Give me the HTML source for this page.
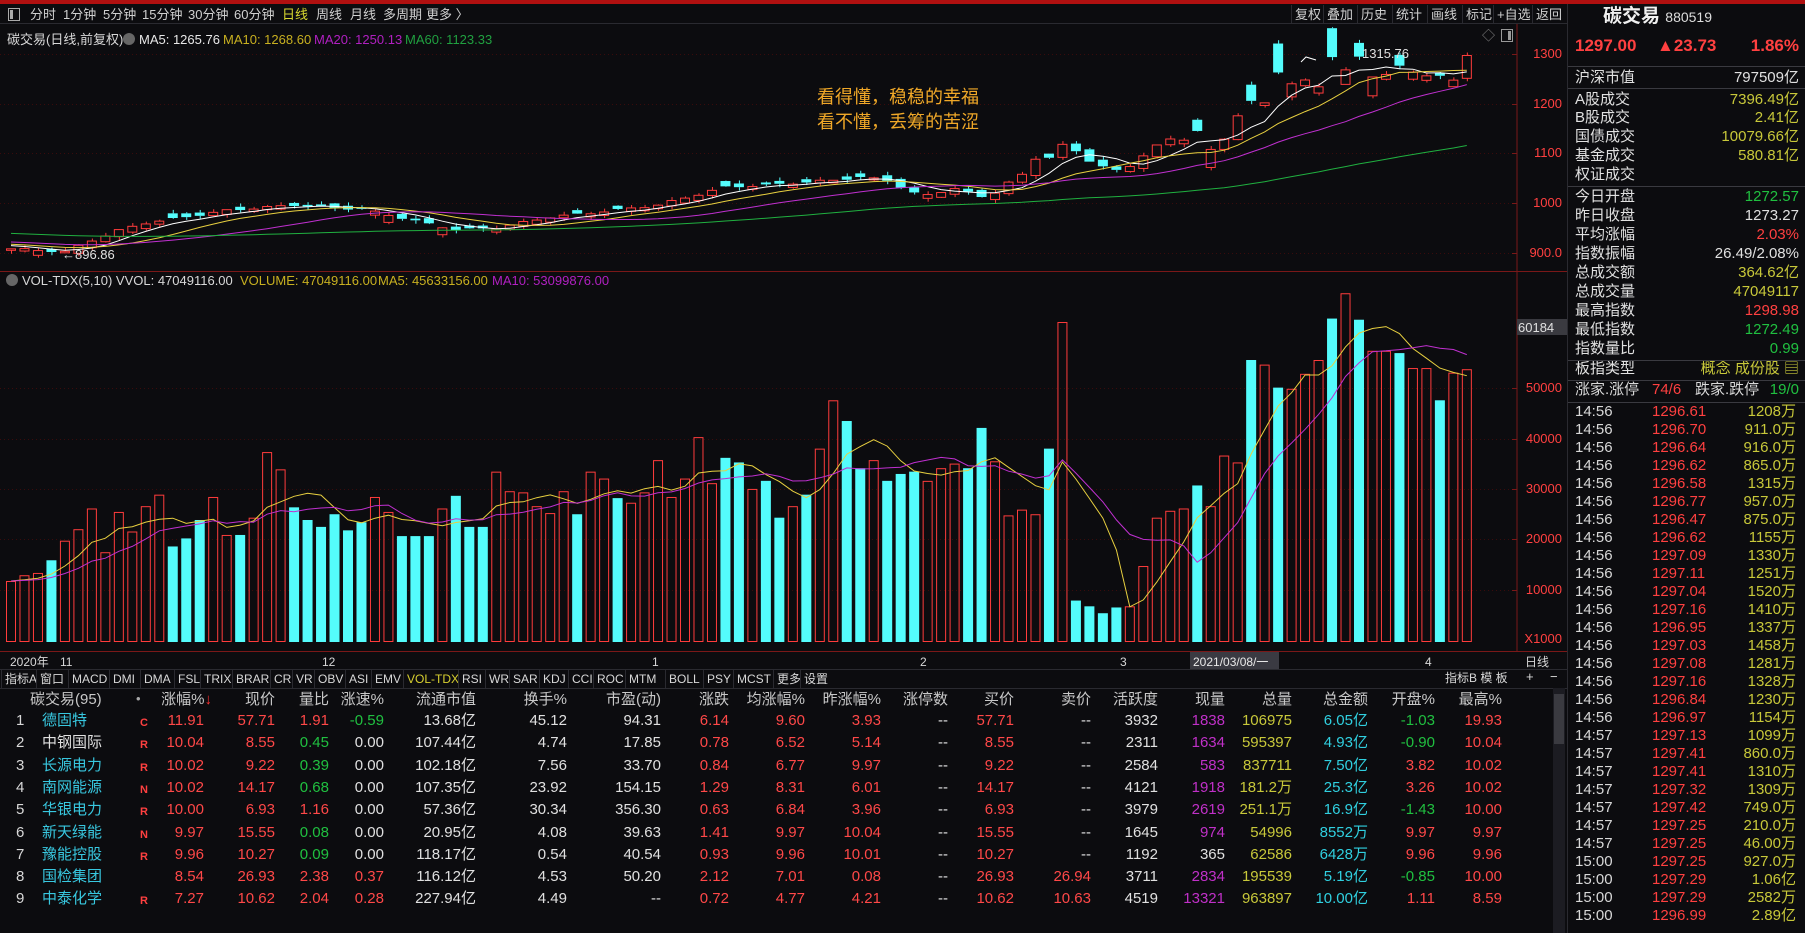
<!DOCTYPE html>
<html><head><meta charset="utf-8">
<style>
*{margin:0;padding:0;box-sizing:border-box}
body{width:1805px;height:933px;background:#0c0c0f;overflow:hidden;position:relative;font-family:"Liberation Sans","Noto Sans CJK SC",sans-serif;color:#d8d8d8}
.a{position:absolute;white-space:nowrap;line-height:1}
.r{text-align:right}
.red{color:#ff4040}.grn{color:#20c040}.yel{color:#c8c83a}.cy{color:#40d8f0}.mag{color:#c040c8}.wh{color:#e0e0e0}
.tb{font-size:13px;color:#d0d0d0}
.hl{position:absolute;height:1px;background:#3a3a40}
</style></head><body>
<div class="a" style="left:0;top:0;width:1805px;height:4px;background:#b01010"></div>
<svg id="g" width="1805" height="933" style="position:absolute;left:0;top:0"></svg>

<div class="a" style="left:0;top:4px;width:1568px;height:20px;border-bottom:1px solid #2a2a30"></div>
<div class="a" style="left:8px;top:8px;width:12px;height:13px;border:1px solid #aaa"></div>
<div class="a" style="left:10px;top:10px;width:3px;height:9px;background:#aaa"></div>
<div class="a tb" style="left:30px;top:8px">分时</div>
<div class="a tb" style="left:63px;top:8px">1分钟</div>
<div class="a tb" style="left:103px;top:8px">5分钟</div>
<div class="a tb" style="left:142px;top:8px">15分钟</div>
<div class="a tb" style="left:188px;top:8px">30分钟</div>
<div class="a tb" style="left:234px;top:8px">60分钟</div>
<div class="a tb" style="left:282px;top:8px;color:#d8d830">日线</div>
<div class="a tb" style="left:316px;top:8px">周线</div>
<div class="a tb" style="left:350px;top:8px">月线</div>
<div class="a tb" style="left:383px;top:8px">多周期</div>
<div class="a tb" style="left:426px;top:8px">更多 〉</div>
<div id="rb"></div>

<div class="a" style="left:7px;top:33px;font-size:13px">碳交易(日线,前复权)</div>
<div class="a" style="left:123px;top:33px;width:12px;height:12px;border-radius:6px;background:#666"></div>
<div class="a" style="left:139px;top:33px;font-size:13px;color:#e8e8e8">MA5: 1265.76</div>
<div class="a" style="left:223px;top:33px;font-size:13px;color:#c8b020">MA10: 1268.60</div>
<div class="a" style="left:314px;top:33px;font-size:13px;color:#b020c0">MA20: 1250.13</div>
<div class="a" style="left:405px;top:33px;font-size:13px;color:#20a040">MA60: 1123.33</div>
<div class="a" style="left:1482px;top:29px;font-size:13px;color:#888">◇</div>
<div class="a" style="left:1501px;top:29px;width:12px;height:13px;border:1px solid #999"></div>
<div class="a" style="left:1508px;top:31px;width:3px;height:9px;background:#999"></div>

<div class="a" style="left:817px;top:88px;font-size:18px;color:#f0a828">看得懂，稳稳的幸福</div>
<div class="a" style="left:817px;top:113px;font-size:18px;color:#f0a828">看不懂，丢筹的苦涩</div>
<div class="a" style="left:1362px;top:47px;font-size:13px;color:#e0e0e0">1315.76</div>
<div class="a" style="left:62px;top:248px;font-size:13px;color:#e0e0e0">←896.86</div>

<div class="a r red" style="left:1508px;top:47px;width:54px;font-size:13px">1300</div>
<div class="a r red" style="left:1508px;top:97px;width:54px;font-size:13px">1200</div>
<div class="a r red" style="left:1508px;top:146px;width:54px;font-size:13px">1100</div>
<div class="a r red" style="left:1508px;top:196px;width:54px;font-size:13px">1000</div>
<div class="a r red" style="left:1508px;top:246px;width:54px;font-size:13px">900.0</div>

<div class="a" style="left:6px;top:274px;width:12px;height:12px;border-radius:6px;background:#666"></div>
<div class="a" style="left:22px;top:274px;font-size:13px">VOL-TDX(5,10) VVOL: 47049116.00</div>
<div class="a" style="left:240px;top:274px;font-size:13px;color:#c8b020">VOLUME: 47049116.00</div>
<div class="a" style="left:378px;top:274px;font-size:13px;color:#c8b020">MA5: 45633156.00</div>
<div class="a" style="left:492px;top:274px;font-size:13px;color:#b020c0">MA10: 53099876.00</div>

<div class="a" style="left:1517px;top:319px;width:50px;height:16px;background:#3a3a40"></div>
<div class="a" style="left:1518px;top:321px;font-size:13px;color:#e0e0e0">60184</div>
<div class="a r red" style="left:1508px;top:381px;width:54px;font-size:13px">50000</div>
<div class="a r red" style="left:1508px;top:432px;width:54px;font-size:13px">40000</div>
<div class="a r red" style="left:1508px;top:482px;width:54px;font-size:13px">30000</div>
<div class="a r red" style="left:1508px;top:532px;width:54px;font-size:13px">20000</div>
<div class="a r red" style="left:1508px;top:583px;width:54px;font-size:13px">10000</div>
<div class="a r red" style="left:1508px;top:632px;width:54px;font-size:13px">X1000</div>

<div class="a" style="left:10px;top:656px;font-size:12px">2020年</div>
<div class="a" style="left:60px;top:656px;font-size:12px">11</div>
<div class="a" style="left:322px;top:656px;font-size:12px">12</div>
<div class="a" style="left:652px;top:656px;font-size:12px">1</div>
<div class="a" style="left:920px;top:656px;font-size:12px">2</div>
<div class="a" style="left:1120px;top:656px;font-size:12px">3</div>
<div class="a" style="left:1190px;top:652px;width:89px;height:17px;background:#3a3a42"></div>
<div class="a" style="left:1193px;top:656px;font-size:12px;color:#e8e8e8">2021/03/08/一</div>
<div class="a" style="left:1425px;top:656px;font-size:12px">4</div>
<div class="a" style="left:1525px;top:656px;font-size:12px">日线</div>

<div id="tabs"></div>
<div class="a" style="left:1445px;top:672px;font-size:12px">指标B 模 板</div>
<div class="a" style="left:1526px;top:670px;font-size:13px">+</div>
<div class="a" style="left:1550px;top:670px;font-size:13px">−</div>
<div class="a" style="left:1553px;top:688px;width:12px;height:245px;background:#1c1c22"></div>
<div class="a" style="left:1554px;top:694px;width:10px;height:50px;background:#3a3a40"></div>
<div id="tbl"></div>

<div class="a" style="left:1567px;top:4px;width:1px;height:929px;background:#2a2a30"></div>
<div class="a" style="left:1603px;top:7px;font-size:19px;font-weight:bold;color:#f0f0f0">碳交易 <span style="font-size:14px;font-weight:normal;color:#ddd">880519</span></div>
<div class="a red" style="left:1575px;top:37px;font-size:17px;font-weight:bold">1297.00</div>
<div class="a red" style="left:1657px;top:37px;font-size:17px;font-weight:bold">▲23.73</div>
<div class="a red r" style="left:1700px;top:37px;width:99px;font-size:17px;font-weight:bold">1.86%</div>
<div id="rp"></div>

<script>
const svg=document.getElementById('g');let s='';
function L(x1,y1,x2,y2,c,w,d){s+=`<line x1="${x1}" y1="${y1}" x2="${x2}" y2="${y2}" stroke="${c}" stroke-width="${w||1}" ${d?'stroke-dasharray="'+d+'"':''}/>`}
L(1517,24,1517,651,'#7a1818');
L(0,271.5,1567,271.5,'#7a1818');
L(0,651.5,1567,651.5,'#7a1818');
L(0,669.5,1567,669.5,'#2a2a30');
L(0,688.5,1567,688.5,'#2a2a30');
[54,104,153,203,253].forEach(y=>L(0,y+.5,1517,y+.5,'#3a0c0c',1,'1 3'));
[388,439,489,539,590].forEach(y=>L(0,y+.5,1517,y+.5,'#3a0c0c',1,'1 3'));
[54,104,153,203,253,388,439,489,539,590].forEach(y=>L(1512,y+.5,1517,y+.5,'#7a1818'));

const tops=[505,500,498,487,470,460,442,480,445,462,440,430,475,468,452,432,465,465,450,393,408,441,452,458,447,461,454,432,445,466,466,466,442,431,458,458,410,427,428,440,446,427,447,410,416,433,437,428,400,432,416,380,420,398,402,425,418,450,440,430,390,348,366,407,400,418,412,410,418,407,403,407,372,401,448,443,447,390,280,522,527,533,528,527,492,450,444,442,422,440,396,402,313,317,337,338,325,313,277,255,278,305,305,307,320,320,348,324,321];
const col=("rrrcrrrrrr rrcccrrcrr rccccccrrc ccrcccrrrr rrcrrcrrrr rrrccrccrc rrccrcccrr rccrrrrcrc cccrrrrrcr rrcrcrrrcr crrcrrcrr").replace(/ /g,'').split('');
const N=tops.length,P=13.48,X0=6,BW=10,VB=642;
const vh=tops.map(t=>(558-t)*1.151);
for(let i=0;i<N;i++){const x=X0+i*P,h=vh[i],y=VB-h;
 if(col[i]=='c')s+=`<rect x="${x}" y="${y}" width="${BW}" height="${h}" fill="#54fcfc"/>`;
 else s+=`<rect x="${x+.5}" y="${y+.5}" width="${BW-1}" height="${h-1}" fill="none" stroke="#ff3c3c"/>`;}
function ma(a,n,pad){return a.map((v,i)=>{let t=0;for(let k=0;k<n;k++){const j=i-k;t+=j>=0?a[j]:(pad?pad[pad.length+j]:a[0]);}return t/n})}
function poly(pts,c,w){s+=`<polyline points="${pts.map(p=>p[0].toFixed(1)+','+p[1].toFixed(1)).join(' ')}" fill="none" stroke="${c}" stroke-width="${w||1}"/>`}
const v5=ma(vh,5),v10=ma(vh,10);
poly(v5.map((v,i)=>[X0+i*P+5,VB-v]),'#e8d040');
poly(v10.map((v,i)=>[X0+i*P+5,VB-v]),'#c030d0');
const kp=[[0,908],[2,905],[4,902],[6,925],[8,945],[10,960],[13,972],[16,985],[21,996],[24,990],[26,988],[29,970],[33,946],[36,950],[40,972],[43,980],[48,996],[53,1032],[56,1036],[61,1046],[63,1052],[65,1046],[67,1020],[68,1016],[70,1030],[72,1012],[73,1022],[74,1042],[75,1056],[76,1089],[77,1093],[78,1117],[79,1103],[80,1085],[82,1065],[83,1073],[84,1097],[85,1117],[86,1127],[87,1127],[88,1147],[89,1107],[90,1127],[91,1177],[92,1207],[93,1200],[94,1262],[95,1242],[96,1248],[97,1232],[98,1294],[99,1270],[100,1294],[101,1252],[102,1260],[103,1278],[104,1262],[105,1255],[106,1258],[107,1248],[108,1297]];
const C=[];for(let i=0;i<N;i++){let a=kp[0],b=kp[kp.length-1];for(let k=0;k<kp.length-1;k++){if(i>=kp[k][0]&&i<=kp[k+1][0]){a=kp[k];b=kp[k+1];break}}
 const t=b[0]==a[0]?0:(i-a[0])/(b[0]-a[0]);C.push(a[1]+(b[1]-a[1])*t+Math.sin(i*1.7)*2);}
C[N-1]=1297;
const Y=p=>54+(1300-p)*0.497;
for(let i=0;i<N;i++){const c=C[i],d=Math.max(3,Math.abs(c-(i?C[i-1]:c))*0.9+Math.abs(Math.sin(i*2.3))*6);
 const o=col[i]=='c'?c+d:c-d;const hi=Math.max(o,c)+Math.abs(Math.sin(i*5.1))*7,lo=Math.min(o,c)-Math.abs(Math.cos(i*4.3))*7;
 const x=X0+i*P,cx=x+5,yt=Y(Math.max(o,c)),yb=Y(Math.min(o,c));
 const cc=col[i]=='c'?'#54fcfc':'#ff3c3c';
 L(cx+.5,Y(hi),cx+.5,yt,cc);L(cx+.5,yb,cx+.5,Y(lo),cc);
 if(col[i]=='c')s+=`<rect x="${x}" y="${yt}" width="${BW}" height="${Math.max(1,yb-yt)}" fill="#54fcfc"/>`;
 else s+=`<rect x="${x+.5}" y="${yt}" width="${BW-1}" height="${Math.max(1,yb-yt)}" fill="#0c0c0f" stroke="#ff3c3c"/>`;}
const pad=[];for(let k=0;k<60;k++)pad.push(965-k*0.85);
[[5,'#ffffff'],[10,'#e8d040'],[20,'#c030d0'],[60,'#20b040']].forEach(([n,c])=>poly(ma(C,n,pad).map((v,i)=>[X0+i*P+5,Y(v)]),c));
s+=`<path d="M1301 62 L1306 57 L1316 60" fill="none" stroke="#fff"/>`;
svg.innerHTML=s;

let h='';[['复权',1295],['叠加',1327],['历史',1361],['统计',1396],['画线',1431],['标记',1466],['+自选',1497],['返回',1536]].forEach(([t,x])=>{h+=`<div class="a tb" style="left:${x}px;top:8px">${t}</div><div class="a" style="left:${x-4}px;top:5px;width:1px;height:19px;background:#2a2a30"></div>`});
document.getElementById('rb').innerHTML=h;

h='';const tabs=[['指标A',5],['窗口',40],['MACD',72],['DMI',113],['DMA',144],['FSL',178],['TRIX',204],['BRAR',236],['CR',274],['VR',296],['OBV',318],['ASI',349],['EMV',375],['VOL-TDX',407],['RSI',462],['WR',489],['SAR',513],['KDJ',543],['CCI',572],['ROC',597],['MTM',629],['BOLL',669],['PSY',707],['MCST',737],['更多',777],['设置',804]];
tabs.forEach(([t,x])=>{h+=`<div class="a" style="left:${x}px;top:673px;font-size:12px;color:${t=='VOL-TDX'?'#d8d030':'#d8d8d8'}">${t}</div><div class="a" style="left:${x-4}px;top:670px;width:1px;height:18px;background:#2a2a30"></div>`});
document.getElementById('tabs').innerHTML=h;

const R=[204,275,329,384,476,567,661,729,805,881,948,1014,1091,1158,1225,1292,1368,1435,1502];
const hd=['涨幅%<span style="color:#ff3030">↓</span>','现价','量比','涨速%','流通市值','换手%','市盈(动)','涨跌','均涨幅%','昨涨幅%','涨停数','买价','卖价','活跃度','现量','总量','总金额','开盘%','最高%'];
h=`<div class="a" style="left:30px;top:692px;font-size:15px;color:#c8c8c8">碳交易(95)</div><div class="a" style="left:136px;top:692px;font-size:13px;color:#aaa">•</div>`;
hd.forEach((t,k)=>{h+=`<div class="a r" style="left:${R[k]-100+(k==0?8:0)}px;width:100px;top:692px;font-size:15px;color:#c8c8c8">${t}</div>`});
const D=[
['德固特','C','11.91','57.71','1.91','-0.59','13.68亿','45.12','94.31','6.14','9.60','3.93','--','57.71','--','3932','1838','106975','6.05亿','-1.03','19.93'],
['中钢国际','R','10.04','8.55','0.45','0.00','107.44亿','4.74','17.85','0.78','6.52','5.14','--','8.55','--','2311','1634','595397','4.93亿','-0.90','10.04'],
['长源电力','R','10.02','9.22','0.39','0.00','102.18亿','7.56','33.70','0.84','6.77','9.97','--','9.22','--','2584','583','837711','7.50亿','3.82','10.02'],
['南网能源','N','10.02','14.17','0.68','0.00','107.35亿','23.92','154.15','1.29','8.31','6.01','--','14.17','--','4121','1918','181.2万','25.3亿','3.26','10.02'],
['华银电力','R','10.00','6.93','1.16','0.00','57.36亿','30.34','356.30','0.63','6.84','3.96','--','6.93','--','3979','2619','251.1万','16.9亿','-1.43','10.00'],
['新天绿能','N','9.97','15.55','0.08','0.00','20.95亿','4.08','39.63','1.41','9.97','10.04','--','15.55','--','1645','974','54996','8552万','9.97','9.97'],
['豫能控股','R','9.96','10.27','0.09','0.00','118.17亿','0.54','40.54','0.93','9.96','10.01','--','10.27','--','1192','365','62586','6428万','9.96','9.96'],
['国检集团','','8.54','26.93','2.38','0.37','116.12亿','4.53','50.20','2.12','7.01','0.08','--','26.93','26.94','3711','2834','195539','5.19亿','-0.85','10.00'],
['中泰化学','R','7.27','10.62','2.04','0.28','227.94亿','4.49','--','0.72','4.77','4.21','--','10.62','10.63','4519','13321','963897','10.00亿','1.11','8.59']];
function cl(k,v,row){
 if(k==0||k==1||k==7||k==8||k==9||k==18)return '#ff4848';
 if(k==2)return parseFloat(v)>=1?'#ff4848':'#20c040';
 if(k==3||k==17)return v.startsWith('-')?'#20c040':(parseFloat(v)>0?'#ff4848':'#e0e0e0');
 if(k==11||k==12)return v=='--'?'#e0e0e0':'#ff4848';
 if(k==14)return row==6?'#e0e0e0':'#c030c8';
 if(k==15)return '#c8c83a';
 if(k==16)return '#30d0e0';
 return '#e0e0e0';}
D.forEach((r,i)=>{const y=713+i*22.3;
 h+=`<div class="a" style="left:16px;top:${y}px;font-size:15px">${i+1}</div>`;
 h+=`<div class="a" style="left:42px;top:${y}px;font-size:15px;color:${i==1?'#e0e0e0':'#38c8e0'}">${r[0]}</div>`;
 if(r[1])h+=`<div class="a" style="left:140px;top:${y+5}px;font-size:11px;font-weight:bold;color:#ff4040">${r[1]}</div>`;
 for(let k=0;k<19;k++)h+=`<div class="a r" style="left:${R[k]-100}px;width:100px;top:${y}px;font-size:15px;color:${cl(k,r[k+2],i)}">${r[k+2]}</div>`;
});
document.getElementById('tbl').innerHTML=h;

h='';
const rows=[['沪深市值','797509亿','#e0e0e0',78],['A股成交','7396.49亿','#c8c83a',100],['B股成交','2.41亿','#c8c83a',118],['国债成交','10079.66亿','#c8c83a',137],['基金成交','580.81亿','#c8c83a',156],['权证成交','','#c8c83a',175],
['今日开盘','1272.57','#20c040',197],['昨日收盘','1273.27','#e0e0e0',216],['平均涨幅','2.03%','#ff4040',235],['指数振幅','26.49/2.08%','#e0e0e0',254],['总成交额','364.62亿','#c8c83a',273],['总成交量','47049117','#c8c83a',292],['最高指数','1298.98','#ff4040',311],['最低指数','1272.49','#20c040',330],['指数量比','0.99','#20c040',349],['板指类型','概念 成份股 ▤','#c8c83a',369]];
rows.forEach(([a,b,c,y])=>{h+=`<div class="a" style="left:1575px;top:${y-8}px;font-size:15px;color:#e0e0e0">${a}</div><div class="a r" style="left:1650px;width:149px;top:${y-8}px;font-size:15px;color:${c}">${b}</div>`});
[66,88,186,360,380,402].forEach(y=>h+=`<div class="hl" style="left:1568px;width:237px;top:${y}px"></div>`);
h+=`<div class="a" style="left:1575px;top:382px;font-size:15px">涨家.涨停</div><div class="a red" style="left:1652px;top:382px;font-size:15px">74/6</div><div class="a" style="left:1695px;top:382px;font-size:15px">跌家.跌停</div><div class="a r grn" style="left:1750px;width:49px;top:382px;font-size:15px">19/0</div>`;
const T=[['14:56','1296.61','1208万'],['14:56','1296.70','911.0万'],['14:56','1296.64','916.0万'],['14:56','1296.62','865.0万'],['14:56','1296.58','1315万'],['14:56','1296.77','957.0万'],['14:56','1296.47','875.0万'],['14:56','1296.62','1155万'],['14:56','1297.09','1330万'],['14:56','1297.11','1251万'],['14:56','1297.04','1520万'],['14:56','1297.16','1410万'],['14:56','1296.95','1337万'],['14:56','1297.03','1458万'],['14:56','1297.08','1281万'],['14:56','1297.16','1328万'],['14:56','1296.84','1230万'],['14:56','1296.97','1154万'],['14:57','1297.13','1099万'],['14:57','1297.41','860.0万'],['14:57','1297.41','1310万'],['14:57','1297.32','1309万'],['14:57','1297.42','749.0万'],['14:57','1297.25','210.0万'],['14:57','1297.25','46.00万'],['15:00','1297.25','927.0万'],['15:00','1297.29','1.06亿'],['15:00','1297.29','2582万'],['15:00','1296.99','2.89亿']];
T.forEach((t,i)=>{const y=404+i*18;h+=`<div class="a" style="left:1575px;top:${y}px;font-size:15px">${t[0]}</div><div class="a red" style="left:1652px;top:${y}px;font-size:15px">${t[1]}</div><div class="a r yel" style="left:1700px;width:96px;top:${y}px;font-size:15px">${t[2]}</div>`});
document.getElementById('rp').innerHTML=h;
</script>
</body></html>
